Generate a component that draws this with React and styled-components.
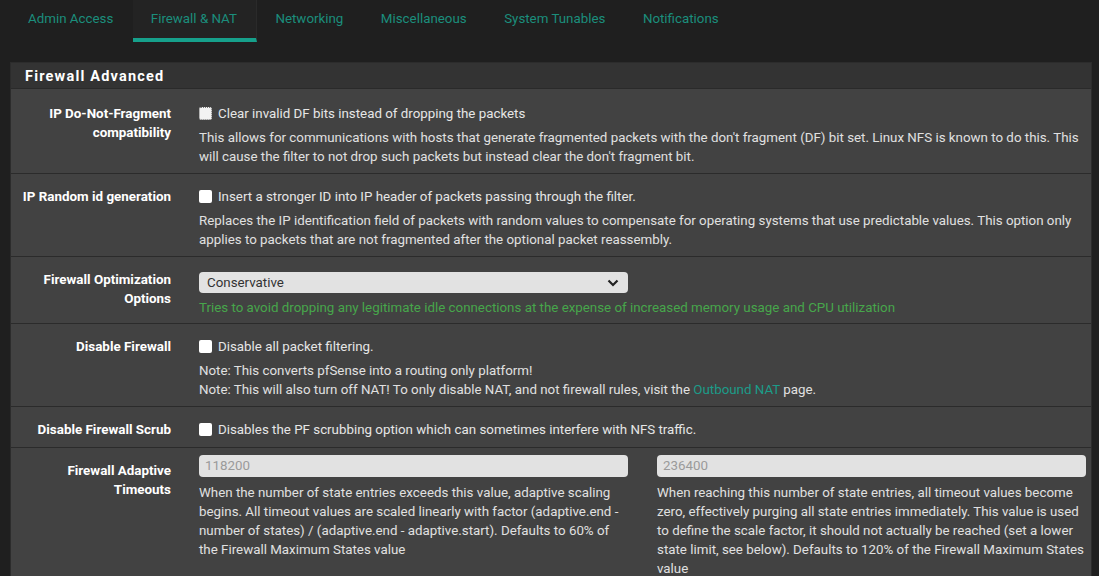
import React from "react"
import styled, { createGlobalStyle, css } from "styled-components"

const GlobalStyle = createGlobalStyle`
	html, body {
		margin: 0;
		padding: 0;
		background: #1f1f1f;
		font-family: Roboto, "Liberation Sans", sans-serif;
		font-size: 13.33px;
		color: #e2e2e2;
	}
`

const tabs = ["Admin Access", "Firewall & NAT", "Networking", "Miscellaneous", "System Tunables", "Notifications"]

const Chevron = () => (
	<svg width="12" height="8" viewBox="0 0 12 8">
		<path d="M1.5 1.5 L6 6 L10.5 1.5" fill="none" stroke="#222" strokeWidth="2.2" />
	</svg>
)

const App = () => {
	return (
		<Page>
			<GlobalStyle />
			<TabBar>
				{tabs.map(t => (
					<Tab key={t} active={t === "Firewall & NAT"}>{t}</Tab>
				))}
			</TabBar>

			<Panel>
				<Heading>Firewall Advanced</Heading>

				<Row first>
					<Label>IP Do-Not-Fragment compatibility</Label>
					<Content>
						<CheckLine>
							<Box focused />
							Clear invalid DF bits instead of dropping the packets
						</CheckLine>
						<Help>
							This allows for communications with hosts that generate fragmented packets with the don't fragment (DF) bit set. Linux NFS is known to do this. This will cause the filter to not drop such packets but instead clear the don't fragment bit.
						</Help>
					</Content>
				</Row>

				<Row>
					<Label>IP Random id generation</Label>
					<Content>
						<CheckLine>
							<Box />
							Insert a stronger ID into IP header of packets passing through the filter.
						</CheckLine>
						<Help>
							Replaces the IP identification field of packets with random values to compensate for operating systems that use predictable values. This option only applies to packets that are not fragmented after the optional packet reassembly.
						</Help>
					</Content>
				</Row>

				<Row select>
					<Label>Firewall Optimization Options</Label>
					<Content>
						<Select>
							<span>Conservative</span>
							<Chevron />
						</Select>
						<Help green>
							Tries to avoid dropping any legitimate idle connections at the expense of increased memory usage and CPU utilization
						</Help>
					</Content>
				</Row>

				<Row>
					<Label>Disable Firewall</Label>
					<Content>
						<CheckLine>
							<Box />
							Disable all packet filtering.
						</CheckLine>
						<Help>
							Note: This converts pfSense into a routing only platform!<br />
							Note: This will also turn off NAT! To only disable NAT, and not firewall rules, visit the <Link>Outbound NAT</Link> page.
						</Help>
					</Content>
				</Row>

				<Row>
					<Label>Disable Firewall Scrub</Label>
					<Content>
						<CheckLine>
							<Box />
							Disables the PF scrubbing option which can sometimes interfere with NFS traffic.
						</CheckLine>
					</Content>
				</Row>

				<Row last>
					<Label>Firewall Adaptive Timeouts</Label>
					<Split>
						<div>
							<Input>118200</Input>
							<Help tight>
								When the number of state entries exceeds this value, adaptive scaling begins. All timeout values are scaled linearly with factor (adaptive.end - number of states) / (adaptive.end - adaptive.start). Defaults to 60% of the Firewall Maximum States value
							</Help>
						</div>
						<div>
							<Input>236400</Input>
							<Help tight>
								When reaching this number of state entries, all timeout values become zero, effectively purging all state entries immediately. This value is used to define the scale factor, it should not actually be reached (set a lower state limit, see below). Defaults to 120% of the Firewall Maximum States value
							</Help>
						</div>
					</Split>
				</Row>
			</Panel>
		</Page>
	)
}

const Page = styled.div`
	padding: 0 7px 0 10px;
	height: 576px;
	overflow: hidden;
`

const TabBar = styled.div`
	display: flex;
	height: 42px;
`

const Tab = styled.div`
	padding: 0 19.5px 0 18px;
	line-height: 38px;
	color: #1b8e7c;
	font-size: 13.33px;
	border-bottom: 4px solid transparent;

	${props => props.active && css`
		background: #232323;
		border-bottom-color: #16a08b;
		border-right: 1px solid #2a2a2a;
	`}
`

const Panel = styled.div`
	margin-top: 20px;
	background: #424242;
	border: 1px solid #2c2c2c;
	border-top: none;
`

const Heading = styled.div`
	height: 27px;
	line-height: 27px;
	background: #333;
	border-top: 1px solid #2c2c2c;
	border-bottom: 1px solid #2a2a2a;
	padding-left: 14px;
	color: #fff;
	font-weight: 700;
	font-size: 14.5px;
	letter-spacing: 1.2px;
	box-sizing: border-box;
`

const Row = styled.div`
	display: grid;
	grid-template-columns: 160px 1fr;
	column-gap: 28px;
	padding: 7px 5px 7px 0;
	border-bottom: 1px solid #2b2b2b;

	${props => props.first && css`
		padding-top: 9px;
	`}

	${props => props.select && css`
		padding-bottom: 6px;
	`}

	${props => props.last && css`
		border-bottom: none;
	`}
`

const Label = styled.div`
	text-align: right;
	color: #fff;
	font-weight: 700;
	font-size: 13.4px;
	line-height: 19px;
	padding: 6px 0 0 8px;
`

const Content = styled.div`
	display: flex;
	flex-direction: column;
`

const CheckLine = styled.div`
	display: flex;
	align-items: center;
	gap: 6px;
	height: 21px;
	margin-top: 5px;
	color: #e6e6e6;
`

const Box = styled.span`
	flex: none;
	width: 13px;
	height: 13px;
	background: #fff;
	border-radius: 2px;
	box-sizing: border-box;

	${props => props.focused && css`
		border: 1px dotted #777;
		background: #f2f2f2;
	`}
`

const Help = styled.div`
	margin-top: 4px;
	line-height: 19px;
	color: ${props => props.green ? "#47a64b" : "#e0e0e0"};

	${props => props.green && css`
		margin-top: 5px;
	`}

	${props => props.tight && css`
		margin-top: 6px;
	`}
`

const Link = styled.span`
	color: #1c9c89;
`

const Select = styled.div`
	display: flex;
	align-items: center;
	justify-content: space-between;
	width: 429px;
	height: 21px;
	margin-top: 8px;
	padding: 0 9px 0 8px;
	box-sizing: border-box;
	background: #e2e2e2;
	border-radius: 4px;
	color: #333;
`

const Split = styled.div`
	display: grid;
	grid-template-columns: 1fr 1fr;
	column-gap: 29px;
`

const Input = styled.div`
	height: 22px;
	line-height: 22px;
	padding-left: 6px;
	background: #e2e2e2;
	border-radius: 4px;
	color: #9a9a9a;
`

export default App
